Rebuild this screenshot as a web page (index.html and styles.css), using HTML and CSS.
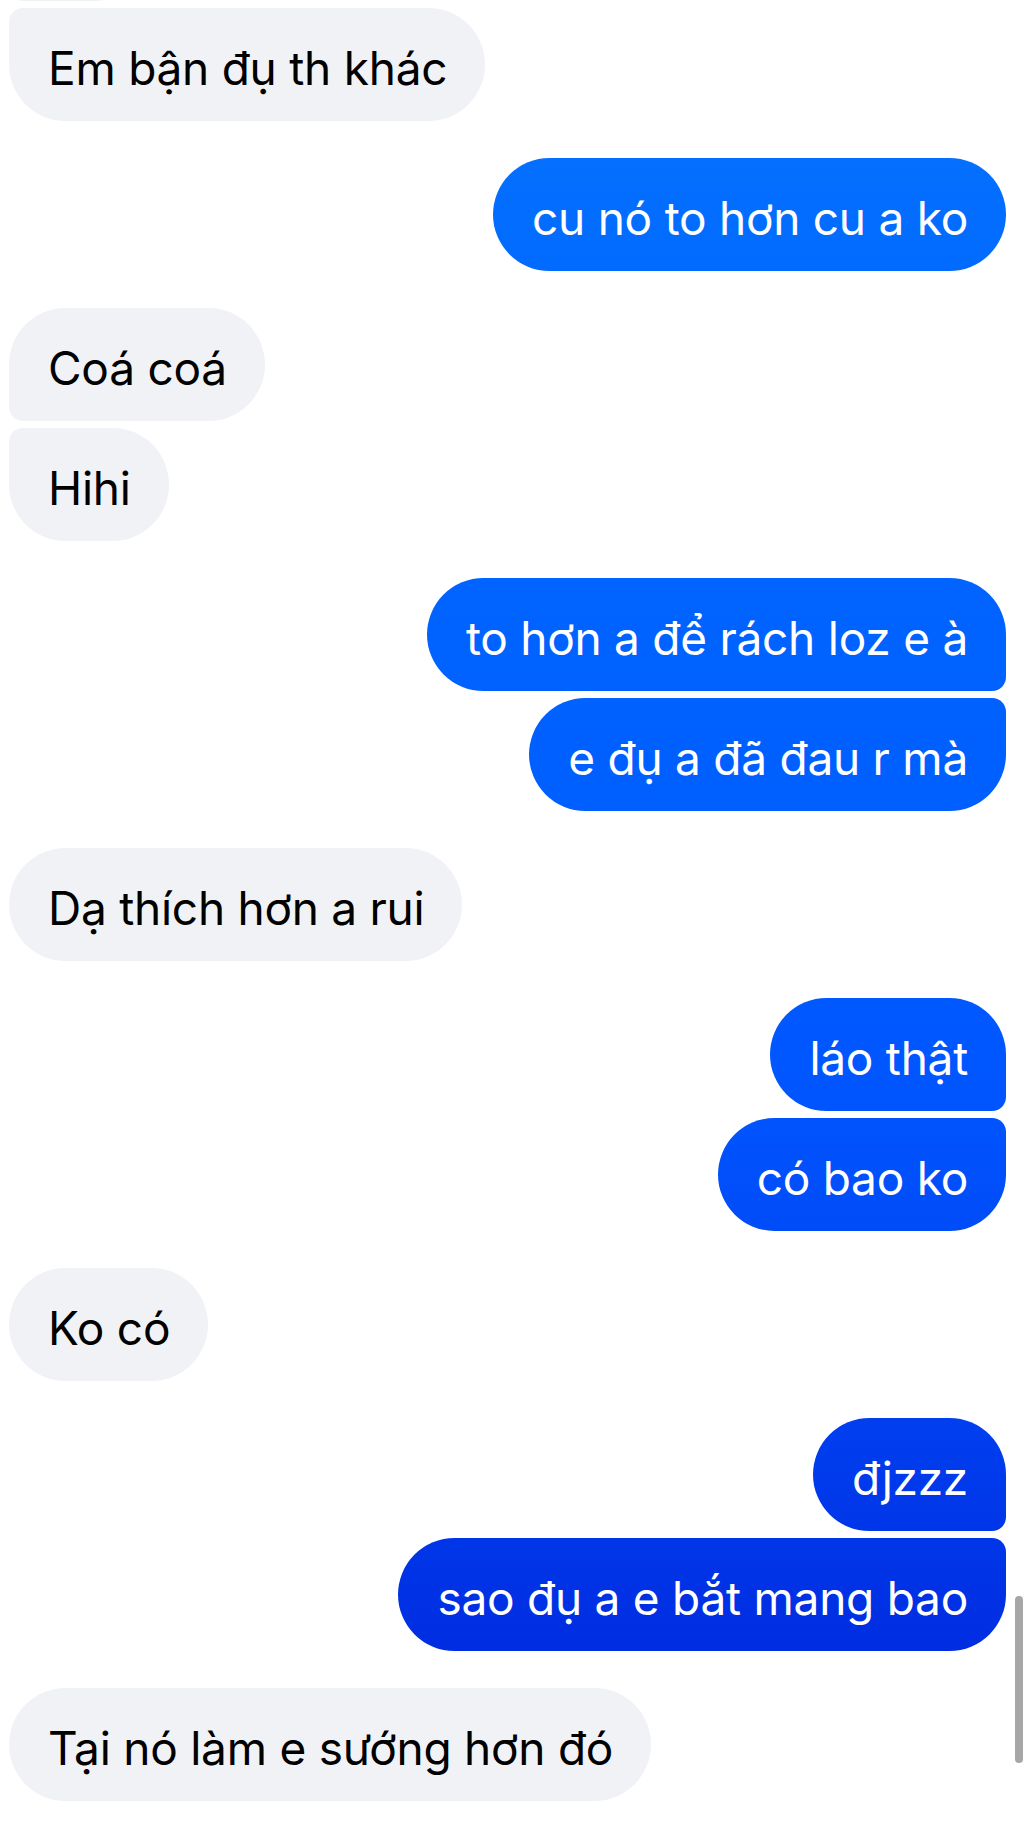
FILE: index.html
```html
<!DOCTYPE html>
<html lang="vi">
<head>
<meta charset="utf-8">
<title>Chat</title>
<link rel="stylesheet" href="styles.css">
</head>
<body>
<div class="thread">
  <div class="msg in first stub">&nbsp;</div>
  <div class="msg in last">Em bận đụ th khác</div>

  <div class="msg out new">cu nó to hơn cu a ko</div>

  <div class="msg in first new">Coá coá</div>
  <div class="msg in last">Hihi</div>

  <div class="msg out first new">to hơn a để rách loz e à</div>
  <div class="msg out last">e đụ a đã đau r mà</div>

  <div class="msg in new">Dạ thích hơn a rui</div>

  <div class="msg out first new">láo thật</div>
  <div class="msg out last">có bao ko</div>

  <div class="msg in new">Ko có</div>

  <div class="msg out first new">đjzzz</div>
  <div class="msg out last">sao đụ a e bắt mang bao</div>

  <div class="msg in new">Tại nó làm e sướng hơn đó</div>
</div>
<div class="scrollbar"></div>
</body>
</html>
```
FILE: styles.css
```css
html, body {
  margin: 0;
  padding: 0;
  height: 1824px;
  overflow: hidden;
  background: #ffffff;
}

body {
  font-family: Inter, "Noto Sans", "Liberation Sans", sans-serif;
  position: relative;
}

.thread {
  display: flex;
  flex-direction: column;
  padding: 0 26px 0 9px;
}

.msg {
  box-sizing: border-box;
  height: 113px;
  padding: 32px 38px 24px 39px;
  font-size: 46px;
  letter-spacing: -0.25px;
  line-height: 57px;
  white-space: nowrap;
  border-radius: 57px;
  margin-top: 7px;
}

.msg.new {
  margin-top: 37px;
}

.stub {
  margin-top: -112px;
  width: 141px;
}

.in {
  align-self: flex-start;
  background: #f1f2f6;
  color: #000000;
}

.out {
  align-self: flex-end;
  color: #ffffff;
  background: linear-gradient(to bottom, #0a74ff 0px, #006aff 300px, #005fff 800px, #0055ff 1100px, #0040f0 1400px, #002de2 1650px, #0024d8 1824px) fixed;
}

.in.first { border-bottom-left-radius: 14px; }
.in.last { border-top-left-radius: 14px; }
.out.first { border-bottom-right-radius: 14px; }
.out.last { border-top-right-radius: 14px; }

.scrollbar {
  position: absolute;
  left: 1015px;
  top: 1596px;
  width: 8px;
  height: 167px;
  border-radius: 4px;
  background: #a6a6a6;
}
```
